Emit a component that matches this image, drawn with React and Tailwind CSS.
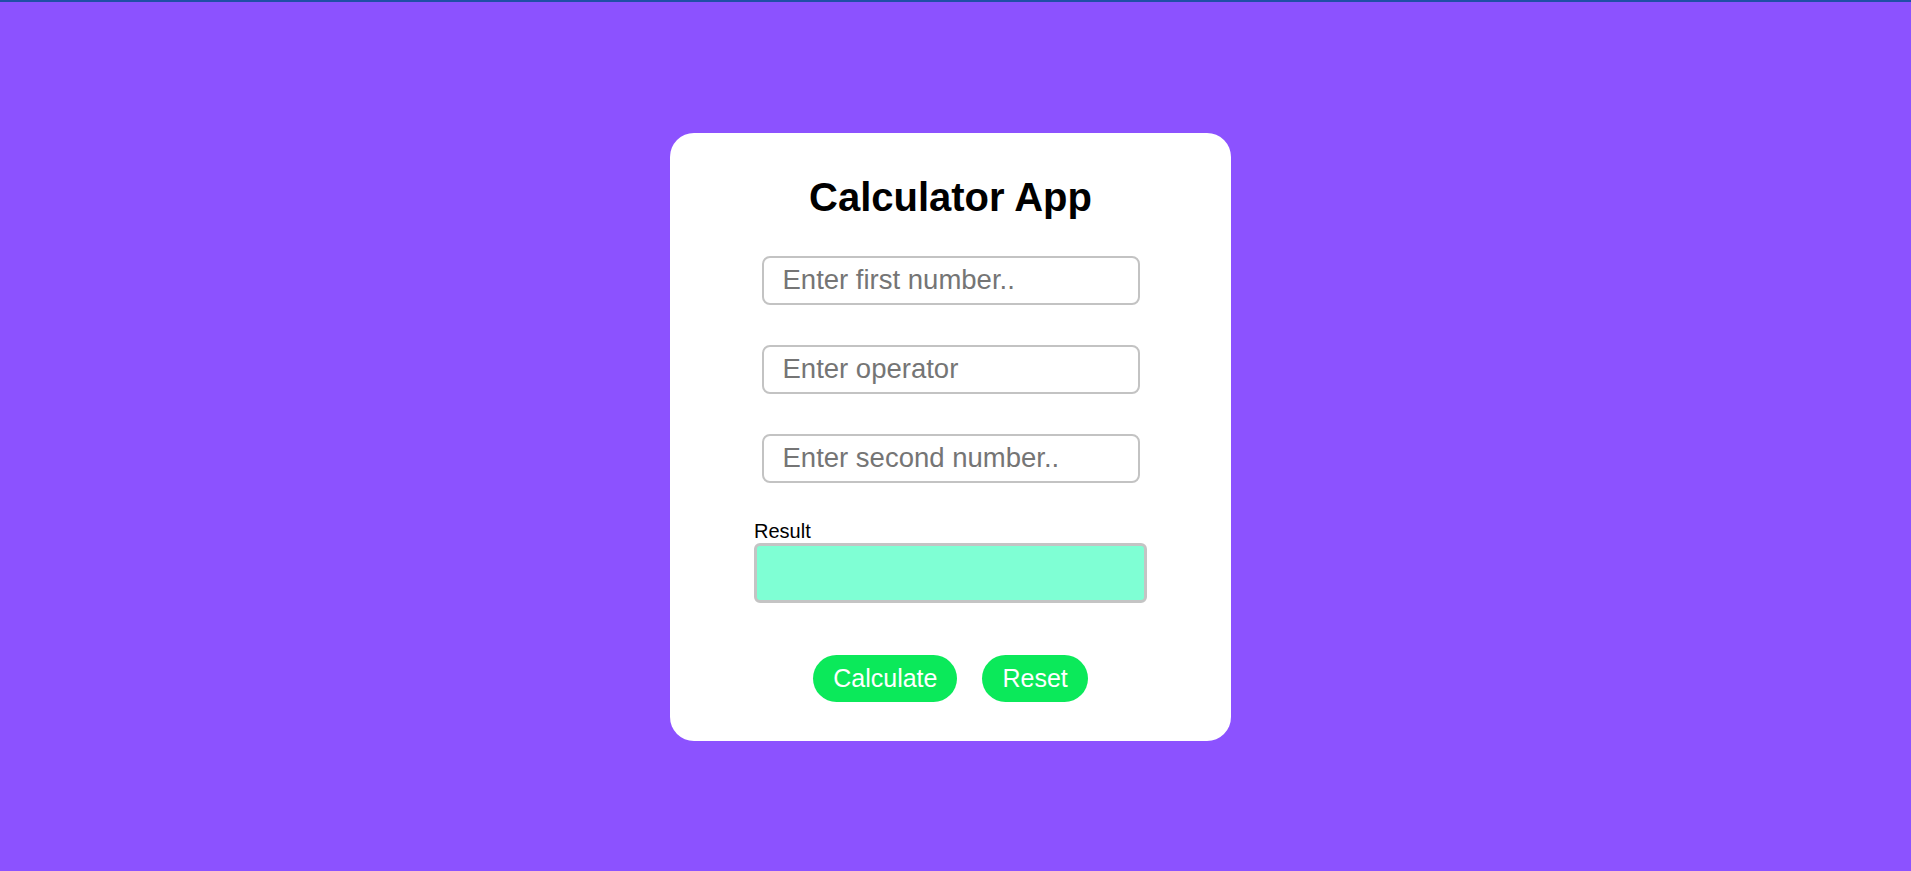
export default function App() {
  const inputCls =
    "w-[378px] h-[49px] rounded-[8px] border-2 border-[#c3c3c3] bg-white pl-[19px] pr-3 text-[27.5px] text-black placeholder:text-[#757575] outline-none";
  return (
    <div
      className="min-h-screen w-full bg-[#8c52ff] flex flex-col"
      style={{ fontFamily: '"Liberation Sans", Arial, sans-serif' }}
    >
      <div className="h-[2px] w-full bg-[#1f4fa6]" />
      <div className="flex-1 flex items-center justify-center pr-[10px]">
        <div className="w-[561px] h-[608px] bg-white rounded-[24px] flex flex-col items-center pt-[41px]">
          <h1 className="text-[40px] leading-[46px] font-bold text-black">Calculator App</h1>
          <div className="mt-[36px] flex flex-col gap-[40px]">
            <input className={inputCls} placeholder="Enter first number.." />
            <input className={inputCls} placeholder="Enter operator" />
            <input className={inputCls} placeholder="Enter second number.." />
          </div>
          <div className="mt-[37px] w-[393px] flex flex-col">
            <label className="text-[20px] leading-[23px] text-black">Result</label>
            <div className="h-[60px] w-full rounded-[6px] border-[3px] border-[#c4c4c4] bg-[#7fffd4]" />
          </div>
          <div className="mt-[52px] flex gap-[25px]">
            <button className="h-[47px] px-[20px] rounded-full bg-[#0be95a] text-white text-[25px] leading-none">
              Calculate
            </button>
            <button className="h-[47px] px-[20px] rounded-full bg-[#0be95a] text-white text-[25px] leading-none">
              Reset
            </button>
          </div>
        </div>
      </div>
    </div>
  );
}
